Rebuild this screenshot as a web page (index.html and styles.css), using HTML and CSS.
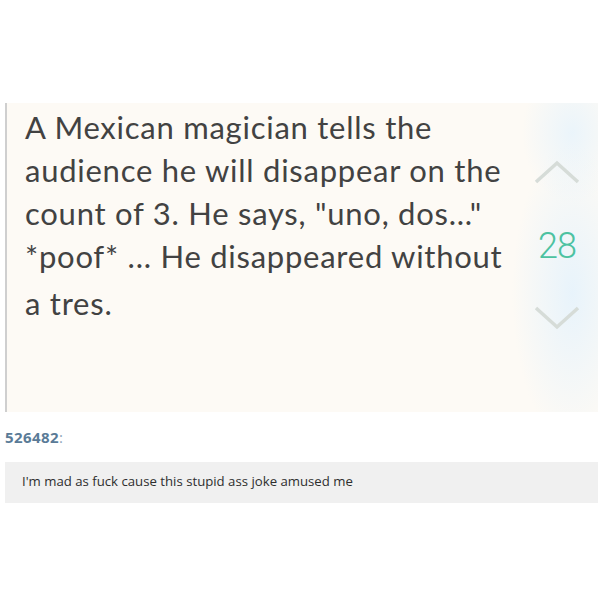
FILE: index.html
```html
<!DOCTYPE html>
<html>
<head>
<meta charset="utf-8">
<link rel="stylesheet" href="styles.css">
</head>
<body>
<div class="post">
  <div class="post-text">A Mexican magician tells the<br>audience he will disappear on the<br>count of 3. He says, "uno, dos..."<br>*poof* ... He disappeared without<br><span class="last">a tres.</span></div>
  <div class="vote">
    <svg class="chev up" width="48" height="26" viewBox="0 0 48 26"><polyline points="3,23 24,4 45,23" fill="none" stroke="#d6dcd8" stroke-width="3.5"/></svg>
    <div class="score">28</div>
    <svg class="chev down" width="48" height="26" viewBox="0 0 48 26"><polyline points="3,3 24,22 45,3" fill="none" stroke="#d6dcd8" stroke-width="3.5"/></svg>
  </div>
</div>
<div class="user">526482<span class="colon">:</span></div>
<div class="comment">I'm mad as fuck cause this stupid ass joke amused me</div>
</body>
</html>
```

FILE: styles.css
```css
html, body {
  margin: 0;
  padding: 0;
  background: #ffffff;
}
.post {
  margin-top: 103px;
  margin-left: 5px;
  width: 591px;
  height: 309px;
  border-left: 2px solid #cfcfcf;
  background:
    radial-gradient(ellipse 60px 150px at 565px 190px, rgba(228,242,252,0.85), rgba(228,242,252,0) 100%),
    radial-gradient(ellipse 50px 70px at 565px 30px, rgba(230,243,252,0.8), rgba(230,243,252,0) 100%),
    #fdfaf5;
  display: flex;
}
.post-text {
  flex: 1;
  padding: 3px 0 0 18px;
  font-family: Lato, "Open Sans", sans-serif;
  font-size: 31px;
  line-height: 43px;
  color: #424242;
  letter-spacing: 0.75px;
  white-space: nowrap;
}
.post-text .last {
  display: inline-block;
  margin-top: 4px;
}
.vote {
  width: 62px;
  margin-right: 10px;
  display: flex;
  flex-direction: column;
  align-items: center;
  padding-top: 56px;
}
.chev {
  display: block;
}
.score {
  margin-top: 43px;
  font-family: Roboto, sans-serif;
  font-weight: 300;
  font-size: 36px;
  line-height: 36px;
  color: #4cc2a1;
  letter-spacing: -1px;
}
.chev.down {
  margin-top: 41px;
}
.user {
  margin: 16px 0 0 5px;
  font-family: "Open Sans", sans-serif;
  font-weight: 700;
  font-size: 15px;
  line-height: 19px;
  letter-spacing: 0.4px;
  color: #5a7b97;
}
.user .colon {
  font-weight: 400;
  color: #8fa6ba;
}
.comment {
  margin: 15px 2px 0 5px;
  height: 41px;
  background: #f0f0f0;
  box-sizing: border-box;
  padding: 10px 0 0 17px;
  font-family: "Open Sans", sans-serif;
  font-size: 13.2px;
  line-height: 18px;
  color: #2e2e2e;
}
```
